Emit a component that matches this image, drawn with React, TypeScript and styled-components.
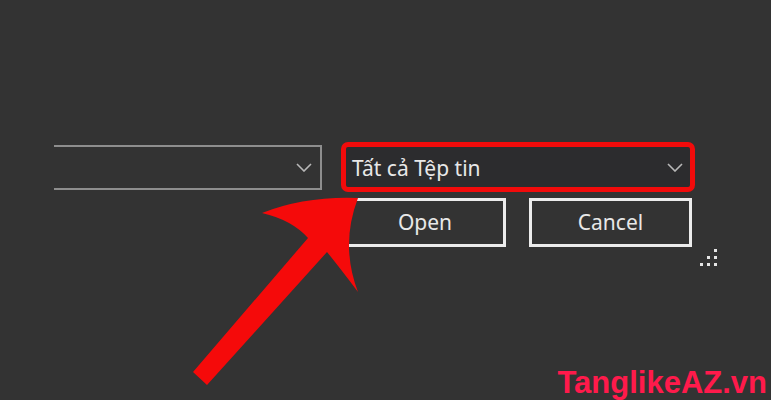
import styled, { createGlobalStyle } from "styled-components"

const GlobalStyle = createGlobalStyle`
  html, body {
    margin: 0;
    padding: 0;
    background: #333333;
  }
  * {
    box-sizing: border-box;
  }
`

const Page = styled.div`
  position: relative;
  width: 771px;
  height: 400px;
  overflow: hidden;
  background: #333333;
  font-family: "Noto Sans", "Open Sans", sans-serif;
  color: #e8e8e8;
  padding: 142px 0 0 54px;
`

const Row = styled.div<{ $gap?: number; $indent?: number; $top?: number }>`
  display: flex;
  align-items: center;
  gap: ${(p) => p.$gap ?? 0}px;
  padding-left: ${(p) => p.$indent ?? 0}px;
  margin-top: ${(p) => p.$top ?? 0}px;
`

const PathCombo = styled.div`
  width: 268px;
  height: 45px;
  border: 2px solid #8e8e8e;
  border-left: none;
  display: flex;
  align-items: center;
  justify-content: flex-end;
  padding-right: 8px;
`

const FilterCombo = styled.div`
  width: 354px;
  height: 50px;
  border: 5px solid #f20b0b;
  border-radius: 7px;
  background: #2c2c2e;
  display: flex;
  align-items: center;
  justify-content: space-between;
  padding: 0 7px 0 6px;
  font-size: 21px;
  line-height: 1;
`

const FilterText = styled.span`
  padding-top: 2px;
`

const Button = styled.div`
  width: ${(p: { $w: number }) => p.$w}px;
  height: 49px;
  border: 3px solid #ececec;
  display: flex;
  align-items: center;
  justify-content: center;
  font-size: 21px;
  padding-bottom: 2px;
`

const Grip = styled.div`
  margin: 2px 0 0 646px;
  width: 17px;
  height: 17px;
  display: grid;
  grid-template-columns: repeat(3, 3px);
  grid-template-rows: repeat(3, 3px);
  column-gap: 4px;
  row-gap: 4px;
`

const GripDot = styled.span<{ $on: boolean }>`
  background: ${(p) => (p.$on ? "#e6e6e6" : "transparent")};
`

const Overlay = styled.svg`
  position: absolute;
  left: 0;
  top: 0;
  pointer-events: none;
`

const Watermark = styled.div`
  position: absolute;
  top: 367px;
  right: 4px;
  font-family: "Liberation Sans", Arial, sans-serif;
  font-weight: 700;
  font-size: 31px;
  line-height: 31px;
  color: #ff1a4b;
`

function Chevron({ color }: { color: string }) {
  return (
    <svg width="16" height="9" viewBox="0 0 16 9">
      <polyline points="1,1 8,8 15,1" fill="none" stroke={color} strokeWidth="1.6" />
    </svg>
  )
}

const gripPattern = [false, false, true, false, true, true, true, true, true]

export default function App() {
  return (
    <Page>
      <GlobalStyle />
      <Row $gap={19}>
        <PathCombo>
          <Chevron color="#b8b8b8" />
        </PathCombo>
        <FilterCombo>
          <FilterText>Tất cả Tệp tin</FilterText>
          <Chevron color="#b8b8b8" />
        </FilterCombo>
      </Row>
      <Row $gap={23} $indent={290} $top={6}>
        <Button $w={162}>Open</Button>
        <Button $w={163}>Cancel</Button>
      </Row>
      <Grip>
        {gripPattern.map((on, i) => (
          <GripDot key={i} $on={on} />
        ))}
      </Grip>

      <Overlay width="771" height="400" viewBox="0 0 771 400">
        <path
          fill="#f50a0a"
          d="M193 372 L308 238 Q292 220 262 213 Q305 196 358 198 Q340 245 358 292 Q340 268 327 252 L207 385 Z"
        />
      </Overlay>
      <Watermark>TanglikeAZ.vn</Watermark>
    </Page>
  )
}
